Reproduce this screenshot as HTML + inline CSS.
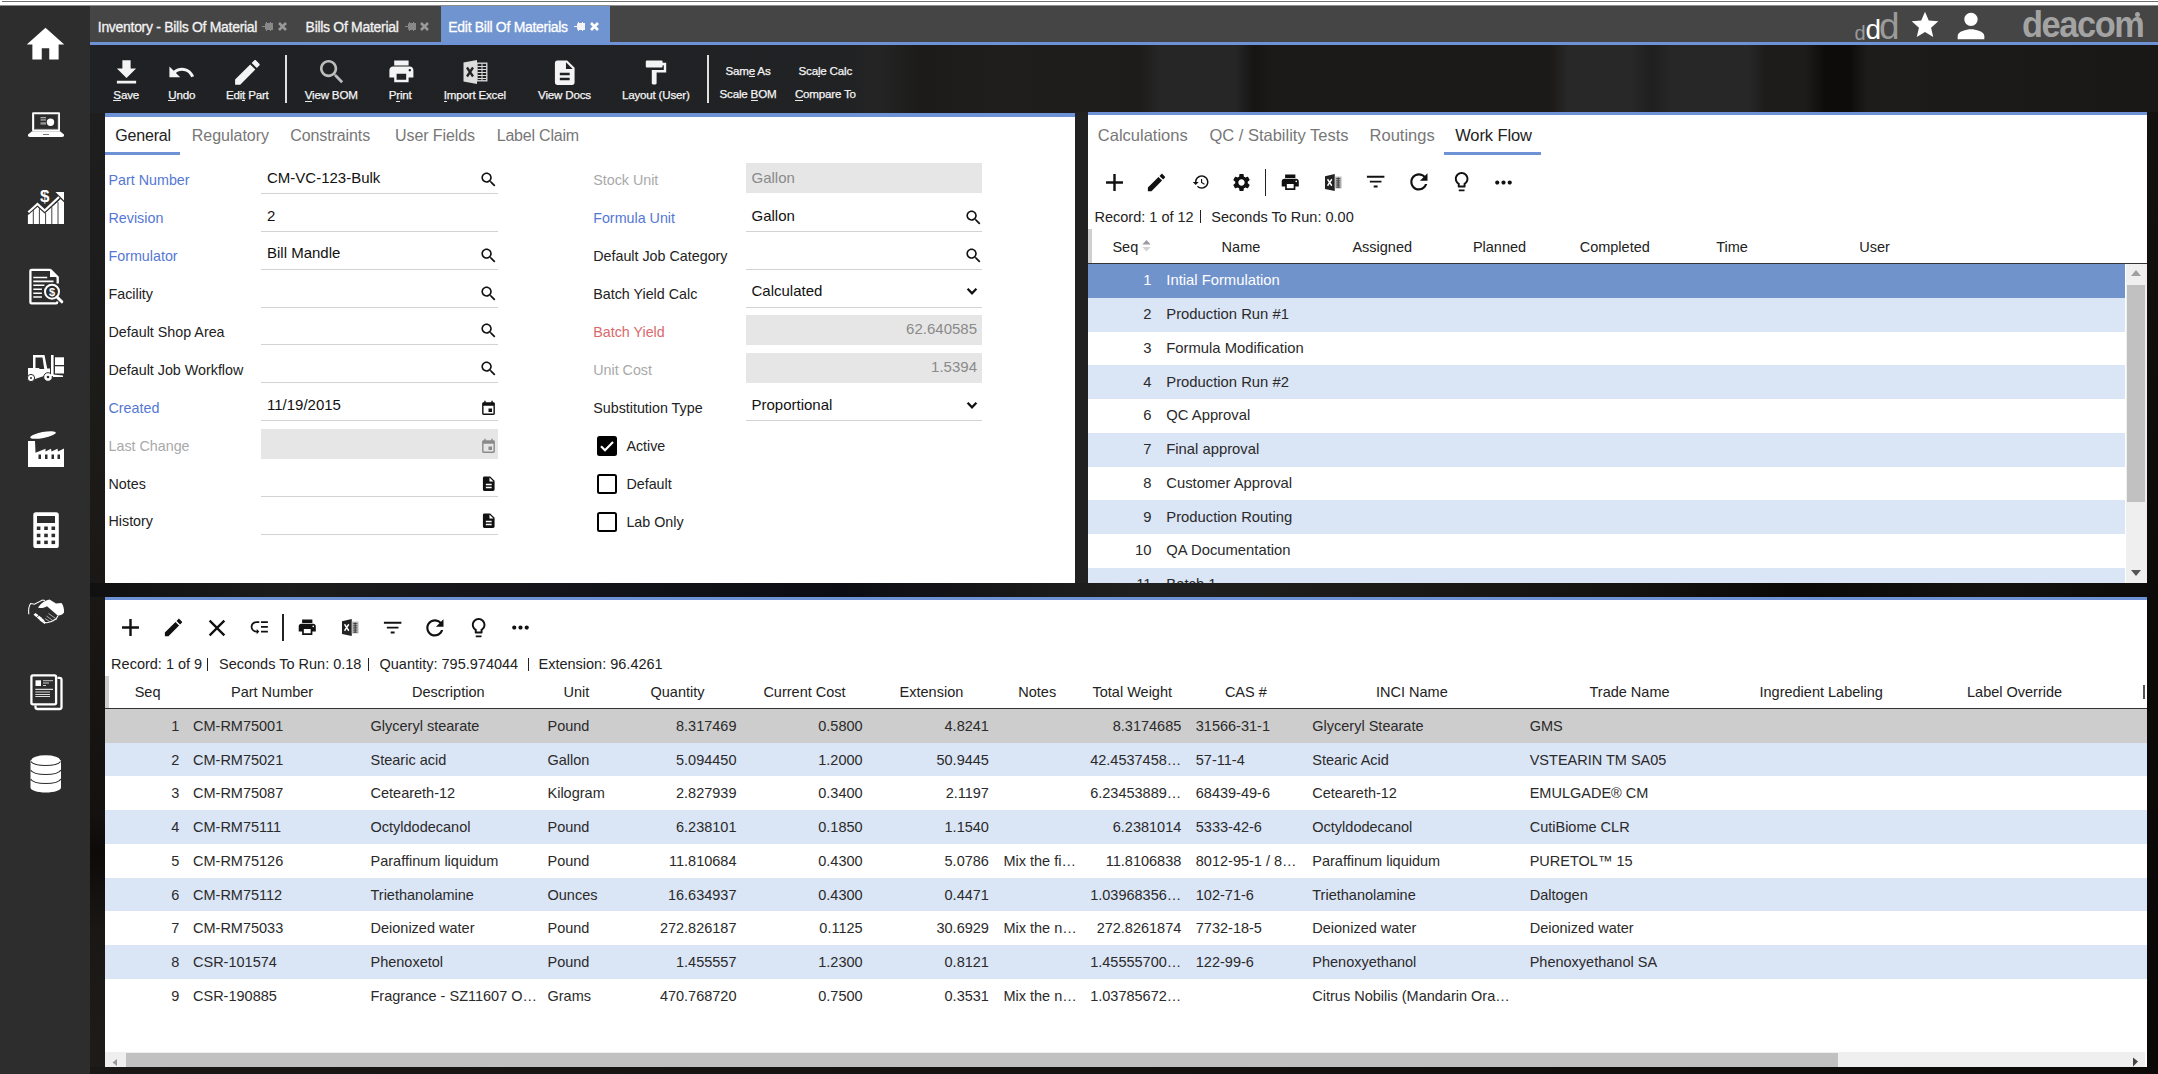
<!DOCTYPE html><html><head><meta charset="utf-8"><style>
*{margin:0;padding:0;box-sizing:border-box}
html,body{width:2158px;height:1074px;overflow:hidden}
body{position:relative;background:#222;font-family:"Liberation Sans",sans-serif;color:#222}
.a{position:absolute}
.t{position:absolute;white-space:nowrap;line-height:1}
</style></head><body>
<div class="a" style="left:0px;top:0px;width:2158px;height:5px;background:#fff;"></div>
<div class="a" style="left:0px;top:5px;width:2158px;height:1px;background:#8c8c8c;"></div>
<div class="a" style="left:2px;top:1px;width:2156px;height:1px;background:#6f6f6f;"></div>
<div class="a" style="left:90px;top:45px;width:2068px;height:1029px;background:linear-gradient(90deg,#202124 0px,#212224 760px,#242424 790px,#1c1b1a 830px,#1f1e1d 910px,#1d1c1b 1050px,#262626 1070px,#262626 1145px,#161514 1164px,#1c1a18 1182px,#1c1a18 1460px,#282828 1478px,#282828 1540px,#1f1f1f 1562px,#272727 1582px,#272727 1658px,#1e1c1b 1675px,#1e1c1b 1715px,#0e0c0a 1735px,#0e0c0a 1760px,#1e1c1a 1778px,#1e1c1a 1825px,#1c1a18 1845px,#1a1816 2068px);"></div>
<div class="a" style="left:90px;top:113px;width:15px;height:961px;background:linear-gradient(180deg,#1e1e1f 0,#1b1a18 400px,#131210 700px,#0c0b0a 740px,#1a1816 820px,#1e1c1a 961px);"></div>
<div class="a" style="left:1075px;top:112px;width:13px;height:471px;background:#212121;"></div>
<div class="a" style="left:90px;top:583px;width:2068px;height:14px;background:linear-gradient(90deg,#101010 0,#1c1c1c 200px,#14141a 450px,#0c0c14 750px,#1a1a1a 950px,#202020 1050px,#1c1b1a 1250px,#131210 1550px,#0a0908 1700px,#141210 1900px,#0c0b0a 2068px);"></div>
<div class="a" style="left:2147px;top:112px;width:11px;height:962px;background:linear-gradient(180deg,#141210 0,#0b0a08 500px,#0a0908 962px);"></div>
<div class="a" style="left:90px;top:1067px;width:2068px;height:7px;background:linear-gradient(90deg,#1a1816 0,#131210 1000px,#0b0a08 2068px);"></div>
<div class="a" style="left:0px;top:6px;width:90px;height:1068px;background:#2d2d2d;"></div>
<div class="a" style="left:90px;top:6px;width:2068px;height:36px;background:#454545;"></div>
<div class="a" style="left:90px;top:42px;width:2068px;height:3px;background:#6d93d6;"></div>
<div class="a" style="left:105px;top:113px;width:970px;height:470px;background:#fff;border-top:4px solid #6d93d6"></div>
<div class="a" style="left:1088px;top:112px;width:1059px;height:471px;background:#fff;border-top:3px solid #6d93d6"></div>
<div class="a" style="left:105px;top:597px;width:2042px;height:470px;background:#fff;border-top:3px solid #6d93d6"></div>
<div class="a" style="left:441px;top:6px;width:169px;height:36px;background:#7094cf;"></div>
<div class="t" style="top:19.75px;font-size:14px;color:#f2f2f2;letter-spacing:-0.3px;left:97.80px;-webkit-text-stroke:0.3px #f2f2f2;">Inventory - Bills Of Material</div>
<div class="t" style="top:19.75px;font-size:14px;color:#f2f2f2;letter-spacing:-0.3px;left:305.60px;-webkit-text-stroke:0.3px #f2f2f2;">Bills Of Material</div>
<div class="t" style="top:19.75px;font-size:14px;color:#fff;letter-spacing:-0.3px;left:448.30px;-webkit-text-stroke:0.3px #fff;">Edit Bill Of Materials</div>
<svg class="a" style="left:262px;top:22px;" width="12" height="9" viewBox="0 0 12 9"><path fill="#888" d="M0 4h3V1.5h1V0h1v1h3V0h1v1h2v7H9v1H8V8H5v1H4V7.5H3V5H0z"/></svg>
<svg class="a" style="left:278px;top:22px;" width="9" height="9" viewBox="0 0 9 9"><path stroke="#999" stroke-width="2.6" d="M1 1L8 8M8 1L1 8"/></svg>
<svg class="a" style="left:405px;top:22px;" width="12" height="9" viewBox="0 0 12 9"><path fill="#888" d="M0 4h3V1.5h1V0h1v1h3V0h1v1h2v7H9v1H8V8H5v1H4V7.5H3V5H0z"/></svg>
<svg class="a" style="left:420px;top:22px;" width="9" height="9" viewBox="0 0 9 9"><path stroke="#999" stroke-width="2.6" d="M1 1L8 8M8 1L1 8"/></svg>
<svg class="a" style="left:574px;top:22px;" width="12" height="9" viewBox="0 0 12 9"><path fill="#f4f4f4" d="M0 4h3V1.5h1V0h1v1h3V0h1v1h2v7H9v1H8V8H5v1H4V7.5H3V5H0z"/></svg>
<svg class="a" style="left:590px;top:22px;" width="9" height="9" viewBox="0 0 9 9"><path stroke="#fff" stroke-width="2.7" d="M1 1L8 8M8 1L1 8"/></svg>
<div class="t" style="top:22.67px;font-size:20px;color:#9a9a9a;left:1854.50px;">d</div>
<div class="t" style="top:15.90px;font-size:28px;color:#fff;left:1865.50px;">d</div>
<div class="t" style="top:8.28px;font-size:37px;color:#9a9a9a;left:1879.00px;">d</div>
<svg class="a" style="left:1909.00px;top:9.00px;" width="32" height="32" viewBox="0 0 24 24"><path fill="#fff" d="M12 17.27L18.18 21l-1.64-7.03L22 9.24l-7.19-.61L12 2 9.19 8.63 2 9.24l5.46 4.73L5.82 21z"/></svg>
<svg class="a" style="left:1951.00px;top:6.00px;" width="40" height="40" viewBox="0 0 24 24"><path fill="#fff" d="M12 12c2.21 0 4-1.79 4-4s-1.79-4-4-4-4 1.79-4 4 1.79 4 4 4zm0 2c-2.67 0-8 1.34-8 4v2h16v-2c0-2.66-5.33-4-8-4z"/></svg>
<div class="t" style="top:6.93px;font-size:36px;color:#a3a3a3;letter-spacing:-1.5px;font-weight:700;left:2022.00px;transform-origin:0 0;transform:scaleX(0.955);">deacom</div>
<div class="a" style="left:2135px;top:12px;width:5px;height:5px;border-radius:50%;background:#a3a3a3"></div>
<svg class="a" style="left:109.80px;top:55.50px;" width="33" height="33" viewBox="0 0 24 24"><path fill="#f4f4f4" d="M19 9h-4V3H9v6H5l7 7 7-7zM5 18v2h14v-2H5z"/></svg>
<div class="t" style="top:88.88px;font-size:11.6px;color:#f4f4f4;letter-spacing:-0.2px;left:126.20px;transform:translateX(-50%);-webkit-text-stroke:0.25px #f4f4f4;">Save</div>
<svg class="a" style="left:167.20px;top:58.30px;" width="28.9" height="28.9" viewBox="0 0 24 24"><path fill="#f4f4f4" d="M12.5 8c-2.65 0-5.05.99-6.9 2.6L2 7v9h9l-3.62-3.62c1.39-1.16 3.16-1.88 5.12-1.88 3.54 0 6.55 2.31 7.6 5.5l2.37-.78C21.08 11.03 17.15 8 12.5 8z"/></svg>
<div class="t" style="top:88.88px;font-size:11.6px;color:#f4f4f4;letter-spacing:-0.2px;left:181.80px;transform:translateX(-50%);-webkit-text-stroke:0.25px #f4f4f4;">Undo</div>
<svg class="a" style="left:231.30px;top:55.90px;" width="32.8" height="32.8" viewBox="0 0 24 24"><path fill="#f4f4f4" d="M3 17.25V21h3.75L17.81 9.94l-3.75-3.75L3 17.25zM20.71 7.04c.39-.39.39-1.02 0-1.41l-2.34-2.34c-.39-.39-1.02-.39-1.41 0l-1.83 1.83 3.75 3.75 1.83-1.83z"/></svg>
<div class="t" style="top:88.88px;font-size:11.6px;color:#f4f4f4;letter-spacing:-0.2px;left:247.30px;transform:translateX(-50%);-webkit-text-stroke:0.25px #f4f4f4;">Edit Part</div>
<div class="a" style="left:285px;top:54.5px;width:2px;height:48px;background:#e0e0e0;"></div>
<svg class="a" style="left:315.80px;top:56.40px;" width="31.8" height="31.8" viewBox="0 0 24 24"><path fill="#bdbdbd" d="M15.5 14h-.79l-.28-.27C15.41 12.59 16 11.11 16 9.5 16 5.91 13.09 3 9.5 3S3 5.91 3 9.5 5.91 16 9.5 16c1.61 0 3.09-.59 4.23-1.57l.27.28v.79l5 4.99L20.49 19l-4.990-5zm-6 0C7.01 14 5 11.990 5 9.5S7.01 5 9.5 5 14 7.01 14 9.5 11.99 14 9.5 14z"/></svg>
<div class="t" style="top:88.88px;font-size:11.6px;color:#f4f4f4;letter-spacing:-0.2px;left:331.20px;transform:translateX(-50%);-webkit-text-stroke:0.25px #f4f4f4;">View BOM</div>
<svg class="a" style="left:386.60px;top:57.10px;" width="28.8" height="28.8" viewBox="0 0 24 24"><path fill="#f4f4f4" d="M19 8H5c-1.66 0-3 1.34-3 3v6h4v4h12v-4h4v-6c0-1.66-1.34-3-3-3zm-3 11H8v-5h8v5zm3-7c-.55 0-1-.45-1-1s.45-1 1-1 1 .45 1 1-.45 1-1 1zm-1-9H6v4h12V3z"/></svg>
<div class="t" style="top:88.88px;font-size:11.6px;color:#f4f4f4;letter-spacing:-0.2px;left:400.20px;transform:translateX(-50%);-webkit-text-stroke:0.25px #f4f4f4;">Print</div>
<div class="t" style="top:88.88px;font-size:11.6px;color:#f4f4f4;letter-spacing:-0.2px;left:474.80px;transform:translateX(-50%);-webkit-text-stroke:0.25px #f4f4f4;">Import Excel</div>
<svg class="a" style="left:549.60px;top:57.50px;" width="29.5" height="29.5" viewBox="0 0 24 24"><path fill="#f4f4f4" d="M14 2H6c-1.1 0-1.99.9-1.99 2L4 20c0 1.1.89 2 1.99 2H18c1.1 0 2-.9 2-2V8l-6-6zm2 16H8v-2h8v2zm0-4H8v-2h8v2zm-3-5V3.5L18.5 9H13z"/></svg>
<div class="t" style="top:88.88px;font-size:11.6px;color:#f4f4f4;letter-spacing:-0.2px;left:564.50px;transform:translateX(-50%);-webkit-text-stroke:0.25px #f4f4f4;">View Docs</div>
<svg class="a" style="left:640.90px;top:57.70px;" width="28.8" height="28.8" viewBox="0 0 24 24"><path fill="#f4f4f4" d="M18 4V3c0-.55-.45-1-1-1H5c-.55 0-1 .45-1 1v4c0 .55.45 1 1 1h12c.55 0 1-.45 1-1V6h1v4H9v11c0 .55.45 1 1 1h2c.55 0 1-.45 1-1v-9h8V4h-3z"/></svg>
<div class="t" style="top:88.88px;font-size:11.6px;color:#f4f4f4;letter-spacing:-0.2px;left:655.80px;transform:translateX(-50%);-webkit-text-stroke:0.25px #f4f4f4;">Layout (User)</div>
<div class="a" style="left:706.5px;top:54.5px;width:2px;height:48px;background:#e0e0e0;"></div>
<div class="t" style="top:64.88px;font-size:11.6px;color:#f4f4f4;letter-spacing:-0.2px;left:748.00px;transform:translateX(-50%);-webkit-text-stroke:0.25px #f4f4f4;">Same As</div>
<div class="t" style="top:64.88px;font-size:11.6px;color:#f4f4f4;letter-spacing:-0.2px;left:825.30px;transform:translateX(-50%);-webkit-text-stroke:0.25px #f4f4f4;">Scale Calc</div>
<div class="t" style="top:88.38px;font-size:11.6px;color:#f4f4f4;letter-spacing:-0.2px;left:748.00px;transform:translateX(-50%);-webkit-text-stroke:0.25px #f4f4f4;">Scale BOM</div>
<div class="t" style="top:88.38px;font-size:11.6px;color:#f4f4f4;letter-spacing:-0.2px;left:825.40px;transform:translateX(-50%);-webkit-text-stroke:0.25px #f4f4f4;">Compare To</div>
<div class="a" style="left:113.4px;top:100px;width:7.5px;height:1px;background:#e8e8e8;"></div>
<div class="a" style="left:168.3px;top:100px;width:8.2px;height:1px;background:#e8e8e8;"></div>
<div class="a" style="left:242.1px;top:100px;width:3.0px;height:1px;background:#e8e8e8;"></div>
<div class="a" style="left:304.7px;top:100.5px;width:7.3px;height:1px;background:#e8e8e8;"></div>
<div class="a" style="left:396.3px;top:100.5px;width:3.7px;height:1px;background:#e8e8e8;"></div>
<div class="a" style="left:443.8px;top:100.5px;width:3.0px;height:1px;background:#e8e8e8;"></div>
<div class="a" style="left:748.7px;top:76px;width:6.3px;height:1px;background:#e8e8e8;"></div>
<div class="a" style="left:818px;top:76px;width:2.4px;height:1px;background:#e8e8e8;"></div>
<div class="a" style="left:750.6px;top:99.6px;width:7.5px;height:1px;background:#e8e8e8;"></div>
<div class="a" style="left:794.9px;top:99.6px;width:8.2px;height:1px;background:#e8e8e8;"></div>
<svg class="a" style="left:462.5px;top:59.6px;" width="25" height="24" viewBox="0 0 24 24"><path fill="#dcdcdc" d="M0 2.5L13.5 0V24L0 21.5z"/><rect x="13.5" y="3.2" width="9.8" height="17.6" fill="none" stroke="#dcdcdc" stroke-width="1.3"/><path stroke="#dcdcdc" stroke-width="1" d="M14 6.5h9M14 9.5h9M14 12.5h9M14 15.5h9M14 18.5h9M18.5 3.5v17"/><path stroke="#222" stroke-width="2.3" d="M3.5 7.5l6 9M9.5 7.5l-6 9"/></svg>
<div class="t" style="top:128.06px;font-size:16px;color:#222;letter-spacing:-0.2px;left:115.30px;">General</div>
<div class="t" style="top:128.06px;font-size:16px;color:#777;left:191.70px;">Regulatory</div>
<div class="t" style="top:128.06px;font-size:16px;color:#777;letter-spacing:-0.1px;left:290.30px;">Constraints</div>
<div class="t" style="top:128.06px;font-size:16px;color:#777;letter-spacing:-0.1px;left:395.10px;">User Fields</div>
<div class="t" style="top:128.06px;font-size:16px;color:#777;letter-spacing:-0.2px;left:496.70px;">Label Claim</div>
<div class="a" style="left:105px;top:152.4px;width:75px;height:3px;background:#6d93d6;"></div>
<div class="t" style="top:173.30px;font-size:14.3px;color:#5577d4;left:108.50px;">Part Number</div>
<div class="a" style="left:261px;top:193px;width:237px;height:1px;background:#d3d3d3;"></div>
<div class="t" style="top:169.60px;font-size:15px;color:#111;left:267.00px;">CM-VC-123-Bulk</div>
<svg class="a" style="left:479.30px;top:169.80px;" width="19.2" height="19.2" viewBox="0 0 24 24"><path fill="#111" d="M15.5 14h-.79l-.28-.27C15.41 12.59 16 11.11 16 9.5 16 5.91 13.09 3 9.5 3S3 5.91 3 9.5 5.91 16 9.5 16c1.61 0 3.09-.59 4.23-1.57l.27.28v.79l5 4.99L20.49 19l-4.990-5zm-6 0C7.01 14 5 11.990 5 9.5S7.01 5 9.5 5 14 7.01 14 9.5 11.99 14 9.5 14z"/></svg>
<div class="t" style="top:211.20px;font-size:14.3px;color:#5577d4;left:108.50px;">Revision</div>
<div class="a" style="left:261px;top:231px;width:237px;height:1px;background:#d3d3d3;"></div>
<div class="t" style="top:207.50px;font-size:15px;color:#111;left:267.00px;">2</div>
<div class="t" style="top:249.10px;font-size:14.3px;color:#5577d4;left:108.50px;">Formulator</div>
<div class="a" style="left:261px;top:269px;width:237px;height:1px;background:#d3d3d3;"></div>
<div class="t" style="top:245.40px;font-size:15px;color:#111;left:267.00px;">Bill Mandle</div>
<svg class="a" style="left:479.30px;top:245.60px;" width="19.2" height="19.2" viewBox="0 0 24 24"><path fill="#111" d="M15.5 14h-.79l-.28-.27C15.41 12.59 16 11.11 16 9.5 16 5.91 13.09 3 9.5 3S3 5.91 3 9.5 5.91 16 9.5 16c1.61 0 3.09-.59 4.23-1.57l.27.28v.79l5 4.99L20.49 19l-4.990-5zm-6 0C7.01 14 5 11.990 5 9.5S7.01 5 9.5 5 14 7.01 14 9.5 11.99 14 9.5 14z"/></svg>
<div class="t" style="top:287.00px;font-size:14.3px;color:#222;left:108.50px;">Facility</div>
<div class="a" style="left:261px;top:307px;width:237px;height:1px;background:#d3d3d3;"></div>
<svg class="a" style="left:479.30px;top:283.50px;" width="19.2" height="19.2" viewBox="0 0 24 24"><path fill="#111" d="M15.5 14h-.79l-.28-.27C15.41 12.59 16 11.11 16 9.5 16 5.91 13.09 3 9.5 3S3 5.91 3 9.5 5.91 16 9.5 16c1.61 0 3.09-.59 4.23-1.57l.27.28v.79l5 4.99L20.49 19l-4.990-5zm-6 0C7.01 14 5 11.990 5 9.5S7.01 5 9.5 5 14 7.01 14 9.5 11.99 14 9.5 14z"/></svg>
<div class="t" style="top:324.90px;font-size:14.3px;color:#222;left:108.50px;">Default Shop Area</div>
<div class="a" style="left:261px;top:344px;width:237px;height:1px;background:#d3d3d3;"></div>
<svg class="a" style="left:479.30px;top:321.40px;" width="19.2" height="19.2" viewBox="0 0 24 24"><path fill="#111" d="M15.5 14h-.79l-.28-.27C15.41 12.59 16 11.11 16 9.5 16 5.91 13.09 3 9.5 3S3 5.91 3 9.5 5.91 16 9.5 16c1.61 0 3.09-.59 4.23-1.57l.27.28v.79l5 4.99L20.49 19l-4.990-5zm-6 0C7.01 14 5 11.990 5 9.5S7.01 5 9.5 5 14 7.01 14 9.5 11.99 14 9.5 14z"/></svg>
<div class="t" style="top:362.80px;font-size:14.3px;color:#222;left:108.50px;">Default Job Workflow</div>
<div class="a" style="left:261px;top:382px;width:237px;height:1px;background:#d3d3d3;"></div>
<svg class="a" style="left:479.30px;top:359.30px;" width="19.2" height="19.2" viewBox="0 0 24 24"><path fill="#111" d="M15.5 14h-.79l-.28-.27C15.41 12.59 16 11.11 16 9.5 16 5.91 13.09 3 9.5 3S3 5.91 3 9.5 5.91 16 9.5 16c1.61 0 3.09-.59 4.23-1.57l.27.28v.79l5 4.99L20.49 19l-4.990-5zm-6 0C7.01 14 5 11.990 5 9.5S7.01 5 9.5 5 14 7.01 14 9.5 11.99 14 9.5 14z"/></svg>
<div class="t" style="top:400.70px;font-size:14.3px;color:#5577d4;left:108.50px;">Created</div>
<div class="a" style="left:261px;top:420px;width:237px;height:1px;background:#d3d3d3;"></div>
<div class="t" style="top:397.00px;font-size:15px;color:#111;left:267.00px;">11/19/2015</div>
<svg class="a" style="left:480.20px;top:399.80px;" width="17" height="17" viewBox="0 0 24 24"><path fill="#111" d="M17 12h-5v5h5v-5zM16 1v2H8V1H6v2H5c-1.11 0-1.99.9-1.99 2L3 19c0 1.1.89 2 2 2h14c1.1 0 2-.9 2-2V5c0-1.1-.9-2-2-2h-1V1h-2zm3 18H5V8h14v11z"/></svg>
<div class="t" style="top:438.60px;font-size:14.3px;color:#a9a9a9;left:108.50px;">Last Change</div>
<div class="a" style="left:261px;top:428.70000000000005px;width:237px;height:30px;background:#e6e6e6;"></div>
<svg class="a" style="left:480.20px;top:437.70px;" width="17" height="17" viewBox="0 0 24 24"><path fill="#8a8a8a" d="M17 12h-5v5h5v-5zM16 1v2H8V1H6v2H5c-1.11 0-1.99.9-1.99 2L3 19c0 1.1.89 2 2 2h14c1.1 0 2-.9 2-2V5c0-1.1-.9-2-2-2h-1V1h-2zm3 18H5V8h14v11z"/></svg>
<div class="t" style="top:476.50px;font-size:14.3px;color:#222;left:108.50px;">Notes</div>
<div class="a" style="left:261px;top:496px;width:237px;height:1px;background:#d3d3d3;"></div>
<svg class="a" style="left:480.00px;top:474.50px;" width="17.5" height="17.5" viewBox="0 0 24 24"><path fill="#111" d="M14 2H6c-1.1 0-1.99.9-1.99 2L4 20c0 1.1.89 2 1.99 2H18c1.1 0 2-.9 2-2V8l-6-6zm2 16H8v-2h8v2zm0-4H8v-2h8v2zm-3-5V3.5L18.5 9H13z"/></svg>
<div class="t" style="top:514.40px;font-size:14.3px;color:#222;left:108.50px;">History</div>
<div class="a" style="left:261px;top:534px;width:237px;height:1px;background:#d3d3d3;"></div>
<svg class="a" style="left:480.00px;top:512.40px;" width="17.5" height="17.5" viewBox="0 0 24 24"><path fill="#111" d="M14 2H6c-1.1 0-1.99.9-1.99 2L4 20c0 1.1.89 2 1.99 2H18c1.1 0 2-.9 2-2V8l-6-6zm2 16H8v-2h8v2zm0-4H8v-2h8v2zm-3-5V3.5L18.5 9H13z"/></svg>
<div class="t" style="top:173.30px;font-size:14.3px;color:#a9a9a9;left:593.20px;">Stock Unit</div>
<div class="a" style="left:746px;top:163.4px;width:236px;height:30px;background:#e6e6e6;"></div>
<div class="t" style="top:169.60px;font-size:15px;color:#8a8a8a;left:751.50px;">Gallon</div>
<div class="t" style="top:211.20px;font-size:14.3px;color:#5577d4;left:593.20px;">Formula Unit</div>
<div class="a" style="left:746px;top:231px;width:236px;height:1px;background:#d3d3d3;"></div>
<div class="t" style="top:207.50px;font-size:15px;color:#111;left:751.50px;">Gallon</div>
<svg class="a" style="left:963.80px;top:207.70px;" width="19.2" height="19.2" viewBox="0 0 24 24"><path fill="#111" d="M15.5 14h-.79l-.28-.27C15.41 12.59 16 11.11 16 9.5 16 5.91 13.09 3 9.5 3S3 5.91 3 9.5 5.91 16 9.5 16c1.61 0 3.09-.59 4.23-1.57l.27.28v.79l5 4.99L20.49 19l-4.990-5zm-6 0C7.01 14 5 11.990 5 9.5S7.01 5 9.5 5 14 7.01 14 9.5 11.99 14 9.5 14z"/></svg>
<div class="t" style="top:249.10px;font-size:14.3px;color:#222;left:593.20px;">Default Job Category</div>
<div class="a" style="left:746px;top:269px;width:236px;height:1px;background:#d3d3d3;"></div>
<svg class="a" style="left:963.80px;top:245.60px;" width="19.2" height="19.2" viewBox="0 0 24 24"><path fill="#111" d="M15.5 14h-.79l-.28-.27C15.41 12.59 16 11.11 16 9.5 16 5.91 13.09 3 9.5 3S3 5.91 3 9.5 5.91 16 9.5 16c1.61 0 3.09-.59 4.23-1.57l.27.28v.79l5 4.99L20.49 19l-4.990-5zm-6 0C7.01 14 5 11.990 5 9.5S7.01 5 9.5 5 14 7.01 14 9.5 11.99 14 9.5 14z"/></svg>
<div class="t" style="top:287.00px;font-size:14.3px;color:#222;left:593.20px;">Batch Yield Calc</div>
<div class="a" style="left:746px;top:307px;width:236px;height:1px;background:#d3d3d3;"></div>
<div class="t" style="top:283.30px;font-size:15px;color:#111;left:751.50px;">Calculated</div>
<svg class="a" style="left:965px;top:286.1px;" width="14" height="12" viewBox="0 0 14 12"><path d="M2.6 2.8L7 7.3L11.4 2.8" stroke="#111" stroke-width="2.3" fill="none"/></svg>
<div class="t" style="top:324.90px;font-size:14.3px;color:#d9696b;left:593.20px;">Batch Yield</div>
<div class="a" style="left:746px;top:315.0px;width:236px;height:30px;background:#e6e6e6;"></div>
<div class="t" style="top:321.20px;font-size:15px;color:#8a8a8a;right:1181.00px;">62.640585</div>
<div class="t" style="top:362.80px;font-size:14.3px;color:#a9a9a9;left:593.20px;">Unit Cost</div>
<div class="a" style="left:746px;top:352.9px;width:236px;height:30px;background:#e6e6e6;"></div>
<div class="t" style="top:359.10px;font-size:15px;color:#8a8a8a;right:1181.00px;">1.5394</div>
<div class="t" style="top:400.70px;font-size:14.3px;color:#222;left:593.20px;">Substitution Type</div>
<div class="a" style="left:746px;top:420px;width:236px;height:1px;background:#d3d3d3;"></div>
<div class="t" style="top:397.00px;font-size:15px;color:#111;left:751.50px;">Proportional</div>
<svg class="a" style="left:965px;top:399.8px;" width="14" height="12" viewBox="0 0 14 12"><path d="M2.6 2.8L7 7.3L11.4 2.8" stroke="#111" stroke-width="2.3" fill="none"/></svg>
<div class="a" style="left:596.5px;top:436px;width:20.5px;height:20px;background:#000;border-radius:2.5px"></div>
<svg class="a" style="left:597px;top:436px;" width="20" height="20" viewBox="0 0 20 20"><path fill="none" stroke="#fff" stroke-width="2.2" d="M4 10.2l4 4 8-8.2"/></svg>
<div class="t" style="top:438.90px;font-size:14.3px;color:#222;left:626.40px;">Active</div>
<div class="a" style="left:596.5px;top:474px;width:20.5px;height:20px;border:2.3px solid #000;border-radius:2.5px"></div>
<div class="t" style="top:476.80px;font-size:14.3px;color:#222;left:626.40px;">Default</div>
<div class="a" style="left:596.5px;top:512px;width:20.5px;height:20px;border:2.3px solid #000;border-radius:2.5px"></div>
<div class="t" style="top:514.70px;font-size:14.3px;color:#222;left:626.40px;">Lab Only</div>
<div class="t" style="top:126.63px;font-size:16.5px;color:#777;left:1097.80px;">Calculations</div>
<div class="t" style="top:126.63px;font-size:16.5px;color:#777;left:1209.40px;">QC / Stability Tests</div>
<div class="t" style="top:126.63px;font-size:16.5px;color:#777;left:1369.60px;">Routings</div>
<div class="t" style="top:126.63px;font-size:16.5px;color:#222;letter-spacing:-0.1px;left:1455.20px;">Work Flow</div>
<div class="a" style="left:1444px;top:151.8px;width:97.4px;height:3px;background:#6d93d6;"></div>
<svg class="a" style="left:1099.60px;top:167.50px;" width="29" height="29" viewBox="0 0 24 24"><path fill="#111" d="M19 13h-6v6h-2v-6H5v-2h6V5h2v6h6v2z"/></svg>
<svg class="a" style="left:1145.40px;top:170.50px;" width="23" height="23" viewBox="0 0 24 24"><path fill="#111" d="M3 17.25V21h3.75L17.81 9.94l-3.75-3.75L3 17.25zM20.71 7.04c.39-.39.39-1.02 0-1.41l-2.34-2.34c-.39-.39-1.02-.39-1.41 0l-1.83 1.83 3.75 3.75 1.83-1.83z"/></svg>
<svg class="a" style="left:1191.50px;top:173.00px;" width="18" height="18" viewBox="0 0 24 24"><path fill="#111" d="M13 3c-4.97 0-9 4.030-9 9H1l3.89 3.89.07.14L9 12H6c0-3.87 3.13-7 7-7s7 3.13 7 7-3.13 7-7 7c-1.93 0-3.68-.79-4.94-2.06l-1.42 1.42C8.27 19.990 10.51 21 13 21c4.97 0 9-4.03 9-9s-4.03-9-9-9zm-1 5v5l4.28 2.54.72-1.21-3.5-2.08V8H12z"/></svg>
<svg class="a" style="left:1231.40px;top:171.50px;" width="21" height="21" viewBox="0 0 24 24"><path fill="#111" d="M19.14 12.94c.04-.3.06-.61.06-.94 0-.32-.02-.64-.07-.94l2.03-1.58c.18-.14.23-.41.12-.61l-1.92-3.32c-.12-.22-.37-.29-.59-.22l-2.39.96c-.5-.38-1.03-.7-1.62-.94l-.36-2.54c-.04-.24-.24-.41-.48-.41h-3.84c-.24 0-.43.17-.47.41l-.36 2.54c-.59.24-1.13.57-1.62.94l-2.39-.96c-.22-.08-.47 0-.59.22L2.74 8.87c-.12.21-.08.47.12.61l2.03 1.58c-.05.3-.09.63-.09.94s.02.64.07.94l-2.03 1.58c-.18.14-.23.41-.12.61l1.92 3.32c.12.22.37.29.59.22l2.39-.96c.5.38 1.03.7 1.62.94l.36 2.54c.05.24.24.41.48.41h3.840c.24 0 .44-.17.47-.41l.36-2.54c.59-.24 1.13-.56 1.62-.94l2.39.96c.22.08.47 0 .59-.22l1.92-3.32c.12-.22.07-.47-.12-.61l-2.01-1.58zM12 15.6c-1.98 0-3.6-1.62-3.6-3.6s1.62-3.6 3.6-3.6 3.6 1.62 3.6 3.6-1.62 3.6-3.6 3.6z"/></svg>
<svg class="a" style="left:1280.15px;top:171.75px;" width="20.5" height="20.5" viewBox="0 0 24 24"><path fill="#111" d="M19 8H5c-1.66 0-3 1.34-3 3v6h4v4h12v-4h4v-6c0-1.66-1.34-3-3-3zm-3 11H8v-5h8v5zm3-7c-.55 0-1-.45-1-1s.45-1 1-1 1 .45 1 1-.45 1-1 1zm-1-9H6v4h12V3z"/></svg>
<svg class="a" style="left:1325.1px;top:173.5px;" width="17" height="17" viewBox="0 0 20 20"><path fill="#222" d="M0 2.5L11.5 0V20L0 17.5z"/><path fill="#bbb" d="M11.5 3h8v14h-8z"/><path stroke="#222" stroke-width="0.9" d="M13 5.5h5M13 8h5M13 10.5h5M13 13h5M13 15.5h5M15.5 4v12"/><path stroke="#fff" stroke-width="1.7" d="M3 6.2l5 7.6M8 6.2l-5 7.6"/></svg>
<svg class="a" style="left:1364.15px;top:170.35px;" width="23.3" height="23.3" viewBox="0 0 24 24"><path fill="#111" d="M10 18h4v-2h-4v2zM3 6v2h18V6H3zm3 7h12v-2H6v2z"/></svg>
<svg class="a" style="left:1405.80px;top:169.10px;" width="25.8" height="25.8" viewBox="0 0 24 24"><path fill="#111" d="M17.65 6.35C16.2 4.9 14.21 4 12 4c-4.42 0-7.99 3.58-7.99 8s3.57 8 7.99 8c3.73 0 6.84-2.55 7.73-6h-2.08c-.82 2.33-3.04 4-5.65 4-3.31 0-6-2.69-6-6s2.69-6 6-6c1.66 0 3.14.69 4.22 1.78L13 11h7V4l-2.35 2.35z"/></svg>
<svg class="a" style="left:1449.85px;top:170.35px;" width="23.3" height="23.3" viewBox="0 0 24 24"><path fill="#111" d="M9 21c0 .55.45 1 1 1h4c.55 0 1-.45 1-1v-1H9v1zm3-19C8.14 2 5 5.14 5 9c0 2.38 1.19 4.47 3 5.74V17c0 .55.45 1 1 1h6c.55 0 1-.45 1-1v-2.26c1.81-1.27 3-3.36 3-5.74 0-3.86-3.14-7-7-7zm2.85 11.1l-.85.6V16h-4v-2.3l-.85-.6C7.8 12.16 7 10.63 7 9c0-2.76 2.24-5 5-5s5 2.24 5 5c0 1.63-.8 3.16-2.15 4.1z"/></svg>
<svg class="a" style="left:1491.40px;top:169.50px;" width="25" height="25" viewBox="0 0 24 24"><path fill="#111" d="M6 10c-1.1 0-2 .9-2 2s.9 2 2 2 2-.9 2-2-.9-2-2-2zm12 0c-1.1 0-2 .9-2 2s.9 2 2 2 2-.9 2-2-.9-2-2-2zm-6 0c-1.1 0-2 .9-2 2s.9 2 2 2 2-.9 2-2-.9-2-2-2z"/></svg>
<div class="a" style="left:1264.5px;top:169.2px;width:1.6px;height:26.5px;background:#222;"></div>
<div class="t" style="top:209.53px;font-size:14.5px;color:#222;left:1094.50px;">Record: 1 of 12</div>
<div class="a" style="left:1199.5px;top:210px;width:1.3px;height:13px;background:#222;"></div>
<div class="t" style="top:209.53px;font-size:14.5px;color:#222;left:1211.30px;">Seconds To Run: 0.00</div>
<div class="a" style="left:1088px;top:229px;width:3.5px;height:34.5px;background:#cfcfcf;"></div>
<div class="t" style="top:239.63px;font-size:14.5px;color:#222;left:1112.40px;">Seq</div>
<div class="t" style="top:239.63px;font-size:14.5px;color:#222;left:1221.60px;">Name</div>
<div class="t" style="top:239.63px;font-size:14.5px;color:#222;left:1352.40px;">Assigned</div>
<div class="t" style="top:239.63px;font-size:14.5px;color:#222;left:1472.90px;">Planned</div>
<div class="t" style="top:239.63px;font-size:14.5px;color:#222;left:1579.70px;">Completed</div>
<div class="t" style="top:239.63px;font-size:14.5px;color:#222;left:1716.20px;">Time</div>
<div class="t" style="top:239.63px;font-size:14.5px;color:#222;left:1859.30px;">User</div>
<svg class="a" style="left:1142px;top:240.3px;" width="9" height="12" viewBox="0 0 9 12"><path fill="#9c9c9c" d="M4.5 0L8.7 4.6H0.3z"/><path fill="#d2d2d2" d="M4.5 11.6L8.7 7H0.3z"/></svg>
<div class="a" style="left:1088px;top:262.7px;width:1059px;height:1.2px;background:#333;"></div>
<div class="a" style="left:1088px;top:264px;width:1037px;height:319px;overflow:hidden">
<div class="a" style="left:0;top:0.00px;width:1037px;height:33.75px;background:#7093cc"></div>
<div class="t" style="right:973.5px;top:9.47px;font-size:14.8px;color:#fff">1</div>
<div class="t" style="left:78.3px;top:9.47px;font-size:14.8px;color:#fff">Intial Formulation</div>
<div class="a" style="left:0;top:33.75px;width:1037px;height:33.75px;background:#dae5f6"></div>
<div class="t" style="right:973.5px;top:43.22px;font-size:14.8px;color:#2a2a2a">2</div>
<div class="t" style="left:78.3px;top:43.22px;font-size:14.8px;color:#2a2a2a">Production Run #1</div>
<div class="a" style="left:0;top:67.50px;width:1037px;height:33.75px;background:#fff"></div>
<div class="t" style="right:973.5px;top:76.97px;font-size:14.8px;color:#2a2a2a">3</div>
<div class="t" style="left:78.3px;top:76.97px;font-size:14.8px;color:#2a2a2a">Formula Modification</div>
<div class="a" style="left:0;top:101.25px;width:1037px;height:33.75px;background:#dae5f6"></div>
<div class="t" style="right:973.5px;top:110.72px;font-size:14.8px;color:#2a2a2a">4</div>
<div class="t" style="left:78.3px;top:110.72px;font-size:14.8px;color:#2a2a2a">Production Run #2</div>
<div class="a" style="left:0;top:135.00px;width:1037px;height:33.75px;background:#fff"></div>
<div class="t" style="right:973.5px;top:144.47px;font-size:14.8px;color:#2a2a2a">6</div>
<div class="t" style="left:78.3px;top:144.47px;font-size:14.8px;color:#2a2a2a">QC Approval</div>
<div class="a" style="left:0;top:168.75px;width:1037px;height:33.75px;background:#dae5f6"></div>
<div class="t" style="right:973.5px;top:178.22px;font-size:14.8px;color:#2a2a2a">7</div>
<div class="t" style="left:78.3px;top:178.22px;font-size:14.8px;color:#2a2a2a">Final approval</div>
<div class="a" style="left:0;top:202.50px;width:1037px;height:33.75px;background:#fff"></div>
<div class="t" style="right:973.5px;top:211.97px;font-size:14.8px;color:#2a2a2a">8</div>
<div class="t" style="left:78.3px;top:211.97px;font-size:14.8px;color:#2a2a2a">Customer Approval</div>
<div class="a" style="left:0;top:236.25px;width:1037px;height:33.75px;background:#dae5f6"></div>
<div class="t" style="right:973.5px;top:245.72px;font-size:14.8px;color:#2a2a2a">9</div>
<div class="t" style="left:78.3px;top:245.72px;font-size:14.8px;color:#2a2a2a">Production Routing</div>
<div class="a" style="left:0;top:270.00px;width:1037px;height:33.75px;background:#fff"></div>
<div class="t" style="right:973.5px;top:279.47px;font-size:14.8px;color:#2a2a2a">10</div>
<div class="t" style="left:78.3px;top:279.47px;font-size:14.8px;color:#2a2a2a">QA Documentation</div>
<div class="a" style="left:0;top:303.75px;width:1037px;height:33.75px;background:#dae5f6"></div>
<div class="t" style="right:973.5px;top:313.22px;font-size:14.8px;color:#2a2a2a">11</div>
<div class="t" style="left:78.3px;top:313.22px;font-size:14.8px;color:#2a2a2a">Batch 1</div>
</div>
<div class="a" style="left:2125.5px;top:264px;width:21px;height:319px;background:#efefef;"></div>
<div class="a" style="left:2127px;top:285px;width:18px;height:217px;background:#c1c1c1;"></div>
<svg class="a" style="left:2130px;top:269px;" width="12" height="8" viewBox="0 0 12 8"><path fill="#a0a0a0" d="M6 1L11 7H1z"/></svg>
<svg class="a" style="left:2130px;top:569px;" width="12" height="8" viewBox="0 0 12 8"><path fill="#555" d="M6 7L11 1H1z"/></svg>
<svg class="a" style="left:116.10px;top:613.00px;" width="29" height="29" viewBox="0 0 24 24"><path fill="#111" d="M19 13h-6v6h-2v-6H5v-2h6V5h2v6h6v2z"/></svg>
<svg class="a" style="left:162.10px;top:616.00px;" width="23" height="23" viewBox="0 0 24 24"><path fill="#111" d="M3 17.25V21h3.75L17.81 9.94l-3.75-3.75L3 17.25zM20.71 7.04c.39-.39.39-1.02 0-1.41l-2.34-2.34c-.39-.39-1.02-.39-1.41 0l-1.83 1.83 3.75 3.75 1.83-1.83z"/></svg>
<svg class="a" style="left:202.70px;top:613.50px;" width="28" height="28" viewBox="0 0 24 24"><path fill="#111" d="M19 6.41L17.59 5 12 10.59 6.41 5 5 6.41 10.59 12 5 17.59 6.41 19 12 13.41 17.59 19 19 17.59 13.41 12z"/></svg>
<svg class="a" style="left:249.40px;top:617.20px;" width="20.6" height="20.6" viewBox="0 0 24 24"><path fill="#111" d="M14 5h8v2h-8zm0 5.5h8v2h-8zm0 5.5h8v2h-8zM2 11.5C2 15.08 4.92 18 8.5 18H9v2l3-3-3-3v2h-.5C6.02 16 4 13.98 4 11.5S6.02 7 8.5 7H12V5H8.5C4.92 5 2 7.92 2 11.5z"/></svg>
<svg class="a" style="left:296.75px;top:617.25px;" width="20.5" height="20.5" viewBox="0 0 24 24"><path fill="#111" d="M19 8H5c-1.66 0-3 1.34-3 3v6h4v4h12v-4h4v-6c0-1.66-1.34-3-3-3zm-3 11H8v-5h8v5zm3-7c-.55 0-1-.45-1-1s.45-1 1-1 1 .45 1 1-.45 1-1 1zm-1-9H6v4h12V3z"/></svg>
<svg class="a" style="left:341.5px;top:619.0px;" width="17" height="17" viewBox="0 0 20 20"><path fill="#222" d="M0 2.5L11.5 0V20L0 17.5z"/><path fill="#bbb" d="M11.5 3h8v14h-8z"/><path stroke="#222" stroke-width="0.9" d="M13 5.5h5M13 8h5M13 10.5h5M13 13h5M13 15.5h5M15.5 4v12"/><path stroke="#fff" stroke-width="1.7" d="M3 6.2l5 7.6M8 6.2l-5 7.6"/></svg>
<svg class="a" style="left:380.55px;top:615.85px;" width="23.3" height="23.3" viewBox="0 0 24 24"><path fill="#111" d="M10 18h4v-2h-4v2zM3 6v2h18V6H3zm3 7h12v-2H6v2z"/></svg>
<svg class="a" style="left:422.40px;top:614.60px;" width="25.8" height="25.8" viewBox="0 0 24 24"><path fill="#111" d="M17.65 6.35C16.2 4.9 14.21 4 12 4c-4.42 0-7.99 3.58-7.99 8s3.57 8 7.99 8c3.73 0 6.84-2.55 7.73-6h-2.08c-.82 2.33-3.04 4-5.65 4-3.31 0-6-2.69-6-6s2.69-6 6-6c1.66 0 3.14.69 4.22 1.78L13 11h7V4l-2.35 2.35z"/></svg>
<svg class="a" style="left:466.65px;top:615.85px;" width="23.3" height="23.3" viewBox="0 0 24 24"><path fill="#111" d="M9 21c0 .55.45 1 1 1h4c.55 0 1-.45 1-1v-1H9v1zm3-19C8.14 2 5 5.14 5 9c0 2.38 1.19 4.47 3 5.74V17c0 .55.45 1 1 1h6c.55 0 1-.45 1-1v-2.26c1.81-1.27 3-3.36 3-5.74 0-3.86-3.14-7-7-7zm2.85 11.1l-.85.6V16h-4v-2.3l-.85-.6C7.8 12.16 7 10.63 7 9c0-2.76 2.24-5 5-5s5 2.24 5 5c0 1.63-.8 3.16-2.15 4.1z"/></svg>
<svg class="a" style="left:508.30px;top:615.00px;" width="25" height="25" viewBox="0 0 24 24"><path fill="#111" d="M6 10c-1.1 0-2 .9-2 2s.9 2 2 2 2-.9 2-2-.9-2-2-2zm12 0c-1.1 0-2 .9-2 2s.9 2 2 2 2-.9 2-2-.9-2-2-2zm-6 0c-1.1 0-2 .9-2 2s.9 2 2 2 2-.9 2-2-.9-2-2-2z"/></svg>
<div class="a" style="left:282px;top:614px;width:1.6px;height:27px;background:#222;"></div>
<div class="t" style="top:656.93px;font-size:14.5px;color:#222;left:111.10px;">Record: 1 of 9</div>
<div class="a" style="left:207px;top:657.5px;width:1.3px;height:13px;background:#222;"></div>
<div class="t" style="top:656.93px;font-size:14.5px;color:#222;left:219.00px;">Seconds To Run: 0.18</div>
<div class="a" style="left:368px;top:657.5px;width:1.3px;height:13px;background:#222;"></div>
<div class="t" style="top:656.93px;font-size:14.5px;color:#222;left:379.50px;">Quantity: 795.974044</div>
<div class="a" style="left:528px;top:657.5px;width:1.3px;height:13px;background:#222;"></div>
<div class="t" style="top:656.93px;font-size:14.5px;color:#222;left:538.50px;">Extension: 96.4261</div>
<div class="a" style="left:105px;top:676px;width:3.5px;height:32px;background:#cfcfcf;"></div>
<div class="t" style="top:685.23px;font-size:14.5px;color:#222;left:134.70px;">Seq</div>
<div class="t" style="top:685.23px;font-size:14.5px;color:#222;left:231.00px;">Part Number</div>
<div class="t" style="top:685.23px;font-size:14.5px;color:#222;left:412.00px;">Description</div>
<div class="t" style="top:685.23px;font-size:14.5px;color:#222;left:563.50px;">Unit</div>
<div class="t" style="top:685.23px;font-size:14.5px;color:#222;left:650.50px;">Quantity</div>
<div class="t" style="top:685.23px;font-size:14.5px;color:#222;left:763.40px;">Current Cost</div>
<div class="t" style="top:685.23px;font-size:14.5px;color:#222;left:899.60px;">Extension</div>
<div class="t" style="top:685.23px;font-size:14.5px;color:#222;left:1018.30px;">Notes</div>
<div class="t" style="top:685.23px;font-size:14.5px;color:#222;left:1092.50px;">Total Weight</div>
<div class="t" style="top:685.23px;font-size:14.5px;color:#222;left:1224.90px;">CAS #</div>
<div class="t" style="top:685.23px;font-size:14.5px;color:#222;left:1376.00px;">INCI Name</div>
<div class="t" style="top:685.23px;font-size:14.5px;color:#222;left:1589.50px;">Trade Name</div>
<div class="t" style="top:685.23px;font-size:14.5px;color:#222;left:1759.50px;">Ingredient Labeling</div>
<div class="t" style="top:685.23px;font-size:14.5px;color:#222;left:1967.00px;">Label Override</div>
<div class="a" style="left:2143px;top:685px;width:1.5px;height:14px;background:#555;"></div>
<div class="a" style="left:105px;top:707.5px;width:2042px;height:1.2px;background:#333;"></div>
<div class="a" style="left:105px;top:708.8px;width:2042px;height:33.75px;background:#cdcdcd;"></div>
<div class="t" style="top:718.83px;font-size:14.5px;color:#2a2a2a;right:1978.70px;">1</div>
<div class="t" style="top:718.83px;font-size:14.5px;color:#2a2a2a;left:193.00px;">CM-RM75001</div>
<div class="t" style="top:718.83px;font-size:14.5px;color:#2a2a2a;left:370.50px;">Glyceryl stearate</div>
<div class="t" style="top:718.83px;font-size:14.5px;color:#2a2a2a;left:547.50px;">Pound</div>
<div class="t" style="top:718.83px;font-size:14.5px;color:#2a2a2a;right:1421.50px;">8.317469</div>
<div class="t" style="top:718.83px;font-size:14.5px;color:#2a2a2a;right:1295.40px;">0.5800</div>
<div class="t" style="top:718.83px;font-size:14.5px;color:#2a2a2a;right:1169.10px;">4.8241</div>
<div class="t" style="top:718.83px;font-size:14.5px;color:#2a2a2a;right:976.70px;">8.3174685</div>
<div class="t" style="top:718.83px;font-size:14.5px;color:#2a2a2a;left:1195.80px;">31566-31-1</div>
<div class="t" style="top:718.83px;font-size:14.5px;color:#2a2a2a;left:1312.30px;">Glyceryl Stearate</div>
<div class="t" style="top:718.83px;font-size:14.5px;color:#2a2a2a;left:1529.70px;">GMS</div>
<div class="a" style="left:105px;top:742.55px;width:2042px;height:33.75px;background:#dae5f6;"></div>
<div class="t" style="top:752.58px;font-size:14.5px;color:#2a2a2a;right:1978.70px;">2</div>
<div class="t" style="top:752.58px;font-size:14.5px;color:#2a2a2a;left:193.00px;">CM-RM75021</div>
<div class="t" style="top:752.58px;font-size:14.5px;color:#2a2a2a;left:370.50px;">Stearic acid</div>
<div class="t" style="top:752.58px;font-size:14.5px;color:#2a2a2a;left:547.50px;">Gallon</div>
<div class="t" style="top:752.58px;font-size:14.5px;color:#2a2a2a;right:1421.50px;">5.094450</div>
<div class="t" style="top:752.58px;font-size:14.5px;color:#2a2a2a;right:1295.40px;">1.2000</div>
<div class="t" style="top:752.58px;font-size:14.5px;color:#2a2a2a;right:1169.10px;">50.9445</div>
<div class="t" style="top:752.58px;font-size:14.5px;color:#2a2a2a;right:976.70px;">42.4537458…</div>
<div class="t" style="top:752.58px;font-size:14.5px;color:#2a2a2a;left:1195.80px;">57-11-4</div>
<div class="t" style="top:752.58px;font-size:14.5px;color:#2a2a2a;left:1312.30px;">Stearic Acid</div>
<div class="t" style="top:752.58px;font-size:14.5px;color:#2a2a2a;left:1529.70px;">VSTEARIN TM SA05</div>
<div class="a" style="left:105px;top:776.3px;width:2042px;height:33.75px;background:#fff;"></div>
<div class="t" style="top:786.33px;font-size:14.5px;color:#2a2a2a;right:1978.70px;">3</div>
<div class="t" style="top:786.33px;font-size:14.5px;color:#2a2a2a;left:193.00px;">CM-RM75087</div>
<div class="t" style="top:786.33px;font-size:14.5px;color:#2a2a2a;left:370.50px;">Ceteareth-12</div>
<div class="t" style="top:786.33px;font-size:14.5px;color:#2a2a2a;left:547.50px;">Kilogram</div>
<div class="t" style="top:786.33px;font-size:14.5px;color:#2a2a2a;right:1421.50px;">2.827939</div>
<div class="t" style="top:786.33px;font-size:14.5px;color:#2a2a2a;right:1295.40px;">0.3400</div>
<div class="t" style="top:786.33px;font-size:14.5px;color:#2a2a2a;right:1169.10px;">2.1197</div>
<div class="t" style="top:786.33px;font-size:14.5px;color:#2a2a2a;right:976.70px;">6.23453889…</div>
<div class="t" style="top:786.33px;font-size:14.5px;color:#2a2a2a;left:1195.80px;">68439-49-6</div>
<div class="t" style="top:786.33px;font-size:14.5px;color:#2a2a2a;left:1312.30px;">Ceteareth-12</div>
<div class="t" style="top:786.33px;font-size:14.5px;color:#2a2a2a;left:1529.70px;">EMULGADE® CM</div>
<div class="a" style="left:105px;top:810.05px;width:2042px;height:33.75px;background:#dae5f6;"></div>
<div class="t" style="top:820.08px;font-size:14.5px;color:#2a2a2a;right:1978.70px;">4</div>
<div class="t" style="top:820.08px;font-size:14.5px;color:#2a2a2a;left:193.00px;">CM-RM75111</div>
<div class="t" style="top:820.08px;font-size:14.5px;color:#2a2a2a;left:370.50px;">Octyldodecanol</div>
<div class="t" style="top:820.08px;font-size:14.5px;color:#2a2a2a;left:547.50px;">Pound</div>
<div class="t" style="top:820.08px;font-size:14.5px;color:#2a2a2a;right:1421.50px;">6.238101</div>
<div class="t" style="top:820.08px;font-size:14.5px;color:#2a2a2a;right:1295.40px;">0.1850</div>
<div class="t" style="top:820.08px;font-size:14.5px;color:#2a2a2a;right:1169.10px;">1.1540</div>
<div class="t" style="top:820.08px;font-size:14.5px;color:#2a2a2a;right:976.70px;">6.2381014</div>
<div class="t" style="top:820.08px;font-size:14.5px;color:#2a2a2a;left:1195.80px;">5333-42-6</div>
<div class="t" style="top:820.08px;font-size:14.5px;color:#2a2a2a;left:1312.30px;">Octyldodecanol</div>
<div class="t" style="top:820.08px;font-size:14.5px;color:#2a2a2a;left:1529.70px;">CutiBiome CLR</div>
<div class="a" style="left:105px;top:843.8px;width:2042px;height:33.75px;background:#fff;"></div>
<div class="t" style="top:853.83px;font-size:14.5px;color:#2a2a2a;right:1978.70px;">5</div>
<div class="t" style="top:853.83px;font-size:14.5px;color:#2a2a2a;left:193.00px;">CM-RM75126</div>
<div class="t" style="top:853.83px;font-size:14.5px;color:#2a2a2a;left:370.50px;">Paraffinum liquidum</div>
<div class="t" style="top:853.83px;font-size:14.5px;color:#2a2a2a;left:547.50px;">Pound</div>
<div class="t" style="top:853.83px;font-size:14.5px;color:#2a2a2a;right:1421.50px;">11.810684</div>
<div class="t" style="top:853.83px;font-size:14.5px;color:#2a2a2a;right:1295.40px;">0.4300</div>
<div class="t" style="top:853.83px;font-size:14.5px;color:#2a2a2a;right:1169.10px;">5.0786</div>
<div class="t" style="top:853.83px;font-size:14.5px;color:#2a2a2a;left:1003.40px;">Mix the fi…</div>
<div class="t" style="top:853.83px;font-size:14.5px;color:#2a2a2a;right:976.70px;">11.8106838</div>
<div class="t" style="top:853.83px;font-size:14.5px;color:#2a2a2a;left:1195.80px;">8012-95-1 / 8…</div>
<div class="t" style="top:853.83px;font-size:14.5px;color:#2a2a2a;left:1312.30px;">Paraffinum liquidum</div>
<div class="t" style="top:853.83px;font-size:14.5px;color:#2a2a2a;left:1529.70px;">PURETOL™ 15</div>
<div class="a" style="left:105px;top:877.55px;width:2042px;height:33.75px;background:#dae5f6;"></div>
<div class="t" style="top:887.58px;font-size:14.5px;color:#2a2a2a;right:1978.70px;">6</div>
<div class="t" style="top:887.58px;font-size:14.5px;color:#2a2a2a;left:193.00px;">CM-RM75112</div>
<div class="t" style="top:887.58px;font-size:14.5px;color:#2a2a2a;left:370.50px;">Triethanolamine</div>
<div class="t" style="top:887.58px;font-size:14.5px;color:#2a2a2a;left:547.50px;">Ounces</div>
<div class="t" style="top:887.58px;font-size:14.5px;color:#2a2a2a;right:1421.50px;">16.634937</div>
<div class="t" style="top:887.58px;font-size:14.5px;color:#2a2a2a;right:1295.40px;">0.4300</div>
<div class="t" style="top:887.58px;font-size:14.5px;color:#2a2a2a;right:1169.10px;">0.4471</div>
<div class="t" style="top:887.58px;font-size:14.5px;color:#2a2a2a;right:976.70px;">1.03968356…</div>
<div class="t" style="top:887.58px;font-size:14.5px;color:#2a2a2a;left:1195.80px;">102-71-6</div>
<div class="t" style="top:887.58px;font-size:14.5px;color:#2a2a2a;left:1312.30px;">Triethanolamine</div>
<div class="t" style="top:887.58px;font-size:14.5px;color:#2a2a2a;left:1529.70px;">Daltogen</div>
<div class="a" style="left:105px;top:911.3px;width:2042px;height:33.75px;background:#fff;"></div>
<div class="t" style="top:921.33px;font-size:14.5px;color:#2a2a2a;right:1978.70px;">7</div>
<div class="t" style="top:921.33px;font-size:14.5px;color:#2a2a2a;left:193.00px;">CM-RM75033</div>
<div class="t" style="top:921.33px;font-size:14.5px;color:#2a2a2a;left:370.50px;">Deionized water</div>
<div class="t" style="top:921.33px;font-size:14.5px;color:#2a2a2a;left:547.50px;">Pound</div>
<div class="t" style="top:921.33px;font-size:14.5px;color:#2a2a2a;right:1421.50px;">272.826187</div>
<div class="t" style="top:921.33px;font-size:14.5px;color:#2a2a2a;right:1295.40px;">0.1125</div>
<div class="t" style="top:921.33px;font-size:14.5px;color:#2a2a2a;right:1169.10px;">30.6929</div>
<div class="t" style="top:921.33px;font-size:14.5px;color:#2a2a2a;left:1003.40px;">Mix the n…</div>
<div class="t" style="top:921.33px;font-size:14.5px;color:#2a2a2a;right:976.70px;">272.8261874</div>
<div class="t" style="top:921.33px;font-size:14.5px;color:#2a2a2a;left:1195.80px;">7732-18-5</div>
<div class="t" style="top:921.33px;font-size:14.5px;color:#2a2a2a;left:1312.30px;">Deionized water</div>
<div class="t" style="top:921.33px;font-size:14.5px;color:#2a2a2a;left:1529.70px;">Deionized water</div>
<div class="a" style="left:105px;top:945.05px;width:2042px;height:33.75px;background:#dae5f6;"></div>
<div class="t" style="top:955.08px;font-size:14.5px;color:#2a2a2a;right:1978.70px;">8</div>
<div class="t" style="top:955.08px;font-size:14.5px;color:#2a2a2a;left:193.00px;">CSR-101574</div>
<div class="t" style="top:955.08px;font-size:14.5px;color:#2a2a2a;left:370.50px;">Phenoxetol</div>
<div class="t" style="top:955.08px;font-size:14.5px;color:#2a2a2a;left:547.50px;">Pound</div>
<div class="t" style="top:955.08px;font-size:14.5px;color:#2a2a2a;right:1421.50px;">1.455557</div>
<div class="t" style="top:955.08px;font-size:14.5px;color:#2a2a2a;right:1295.40px;">1.2300</div>
<div class="t" style="top:955.08px;font-size:14.5px;color:#2a2a2a;right:1169.10px;">0.8121</div>
<div class="t" style="top:955.08px;font-size:14.5px;color:#2a2a2a;right:976.70px;">1.45555700…</div>
<div class="t" style="top:955.08px;font-size:14.5px;color:#2a2a2a;left:1195.80px;">122-99-6</div>
<div class="t" style="top:955.08px;font-size:14.5px;color:#2a2a2a;left:1312.30px;">Phenoxyethanol</div>
<div class="t" style="top:955.08px;font-size:14.5px;color:#2a2a2a;left:1529.70px;">Phenoxyethanol SA</div>
<div class="a" style="left:105px;top:978.8px;width:2042px;height:33.75px;background:#fff;"></div>
<div class="t" style="top:988.83px;font-size:14.5px;color:#2a2a2a;right:1978.70px;">9</div>
<div class="t" style="top:988.83px;font-size:14.5px;color:#2a2a2a;left:193.00px;">CSR-190885</div>
<div class="t" style="top:988.83px;font-size:14.5px;color:#2a2a2a;left:370.50px;">Fragrance - SZ11607 O…</div>
<div class="t" style="top:988.83px;font-size:14.5px;color:#2a2a2a;left:547.50px;">Grams</div>
<div class="t" style="top:988.83px;font-size:14.5px;color:#2a2a2a;right:1421.50px;">470.768720</div>
<div class="t" style="top:988.83px;font-size:14.5px;color:#2a2a2a;right:1295.40px;">0.7500</div>
<div class="t" style="top:988.83px;font-size:14.5px;color:#2a2a2a;right:1169.10px;">0.3531</div>
<div class="t" style="top:988.83px;font-size:14.5px;color:#2a2a2a;left:1003.40px;">Mix the n…</div>
<div class="t" style="top:988.83px;font-size:14.5px;color:#2a2a2a;right:976.70px;">1.03785672…</div>
<div class="t" style="top:988.83px;font-size:14.5px;color:#2a2a2a;left:1312.30px;">Citrus Nobilis (Mandarin Ora…</div>
<div class="a" style="left:105px;top:1052px;width:2039.5px;height:15px;background:#efefef;"></div>
<div class="a" style="left:125.6px;top:1052.5px;width:1712.4px;height:14px;background:#c1c1c1;"></div>
<svg class="a" style="left:109px;top:1056.5px;" width="10" height="11" viewBox="0 0 10 11"><path fill="#999" d="M3.5 5.5L8 2V9z"/></svg>
<svg class="a" style="left:2130px;top:1056px;" width="10" height="11" viewBox="0 0 10 11"><path fill="#444" d="M3 1.5L8 5.5L3 10.5z"/></svg>
<svg class="a" style="left:23.30px;top:21.50px;" width="45" height="45" viewBox="0 0 24 24"><path fill="#fff" d="M10 20v-6h4v6h5v-8h3L12 3 2 12h3v8z"/></svg>
<svg class="a" style="left:20px;top:100px;" width="50" height="50" viewBox="0 0 50 50"><rect x="12.1" y="12.3" width="27.9" height="19" rx="1" fill="#fff"/><rect x="14" y="14.1" width="24.2" height="15.4" fill="#555"/><rect x="15" y="15" width="22.2" height="13.6" fill="#2d2d2d"/><rect x="20.5" y="17" width="5.5" height="1.3" fill="#aaa"/><rect x="20.5" y="19.3" width="5.5" height="1.3" fill="#aaa"/><rect x="20.5" y="22.3" width="5.5" height="2.3" fill="#999"/><circle cx="30.5" cy="22.3" r="3.7" fill="#fff"/><path d="M12 31.2H40L44 34.5Q44.3 37 42 37H10Q7.6 37 8 34.5z" fill="#fff"/><rect x="23" y="34" width="6" height="0.9" fill="#666"/></svg>
<svg class="a" style="left:20px;top:180px;" width="50" height="50" viewBox="0 0 50 50"><path d="M7.9 34.8L17.5 26.6L24.7 33.2L40.6 19L44 22.3V44H7.9z" fill="#fff"/><path d="M13.3 30V44M19.4 27V44M25.6 33V44M31.8 27V44M38 22V44" stroke="#2d2d2d" stroke-width="0.9"/><path d="M7.3 33.5L17.5 24.5L24.7 31L38 19" stroke="#2d2d2d" stroke-width="3.6" fill="none"/><path d="M8.3 32.2L17.5 24L24.7 30.5L39 17" stroke="#fff" stroke-width="2.2" fill="none"/><path d="M35.5 12H44V20.5z" fill="#fff"/><text x="24.8" y="22" font-family="Liberation Sans" font-weight="700" font-size="17" text-anchor="middle" fill="#fff">$</text></svg>
<svg class="a" style="left:20px;top:260px;" width="50" height="50" viewBox="0 0 50 50"><path d="M30.5 9.9H11.5Q10.4 9.9 10.4 11V42.3Q10.4 43.4 11.5 43.4H36.1Q37.2 43.4 37.2 42.3V41.5" stroke="#fff" stroke-width="2.3" fill="none"/><path d="M30.3 9.9L37.7 17.3V23.6" stroke="#fff" stroke-width="2.3" fill="none"/><path d="M30 9L38 17H30z" fill="#fff"/><path d="M13.3 17.5H27.2M13.3 21.4H33.5M13.3 25.3H24.4M13.3 29.3H21.9M13.3 33.2H21.9M13.3 37H21.9" stroke="#fff" stroke-width="1.6"/><circle cx="32" cy="31.7" r="7" stroke="#2d2d2d" stroke-width="4" fill="#2d2d2d"/><circle cx="32" cy="31.7" r="7" stroke="#fff" stroke-width="2" fill="none"/><path d="M37 37L41.8 41.8" stroke="#fff" stroke-width="3" stroke-linecap="round"/><text x="32" y="36" font-family="Liberation Sans" font-weight="700" font-size="11" text-anchor="middle" fill="#fff">$</text></svg>
<svg class="a" style="left:20px;top:343px;" width="50" height="50" viewBox="0 0 50 50"><path d="M13 12H24.5L27.2 25.5H30V30H8V25H13z" fill="#fff"/><path d="M15.5 14.5H22.5L24.5 27.7H19.5L19.3 25H15.5z" fill="#2d2d2d"/><path d="M8 26H30V31L24 33L15 36H8z" fill="#fff"/><circle cx="11" cy="35" r="3.6" fill="#fff" stroke="#2d2d2d" stroke-width="1"/><circle cx="11" cy="35" r="1" fill="#2d2d2d"/><circle cx="28" cy="34" r="4.3" fill="#fff" stroke="#2d2d2d" stroke-width="1"/><circle cx="28" cy="34" r="1.3" fill="#2d2d2d"/><rect x="31" y="12" width="2.6" height="21" fill="#fff"/><path d="M33 31.5L43 32.5V34L33 34z" fill="#fff"/><rect x="35" y="14.3" width="9" height="7.7" fill="#fff"/><rect x="35" y="23.3" width="9" height="7.2" fill="#fff"/></svg>
<svg class="a" style="left:20px;top:423px;" width="50" height="50" viewBox="0 0 50 50"><path d="M8 18H15L15.5 29.7L25.5 25.7V28.5L31 25.7L31.5 28.5L37.5 25.7L38 28.5L44 25.5V44H8z" fill="#fff"/><path d="M18.5 31.5h2.5v4.5h-2.5zM25 31.5h2.5v4.5H25zM31.5 31.5h2.5v4.5h-2.5zM37.5 31.5h2.5v4.5h-2.5z" fill="#2d2d2d"/><ellipse cx="23" cy="12" rx="13" ry="3" transform="rotate(-11 23 12)" fill="#fff"/></svg>
<svg class="a" style="left:20px;top:505px;" width="50" height="50" viewBox="0 0 50 50"><rect x="13.3" y="7.2" width="25.5" height="35.8" rx="2.6" fill="#fff"/><rect x="17" y="11" width="18" height="7" fill="#2d2d2d"/><rect x="16.8" y="21.5" width="3.6" height="3.5" fill="#2d2d2d"/><rect x="16.8" y="28.7" width="3.6" height="3.5" fill="#2d2d2d"/><rect x="16.8" y="35.6" width="3.6" height="3.5" fill="#2d2d2d"/><rect x="24.2" y="21.5" width="3.6" height="3.5" fill="#2d2d2d"/><rect x="24.2" y="28.7" width="3.6" height="3.5" fill="#2d2d2d"/><rect x="24.2" y="35.6" width="3.6" height="3.5" fill="#2d2d2d"/><rect x="31.5" y="21.5" width="3.6" height="3.5" fill="#2d2d2d"/><rect x="31.5" y="28.7" width="3.6" height="3.5" fill="#2d2d2d"/><rect x="31.5" y="35.6" width="3.6" height="3.5" fill="#2d2d2d"/></svg>
<svg class="a" style="left:20px;top:586px;" width="50" height="50" viewBox="0 0 50 50"><path d="M18 21.5C21 17 25 14.5 29.5 13.6L36 17.4L41.5 17C43.5 19.5 44.3 23 44 26.5C43 28.5 40.5 29.3 38 29.8L27 20.3C24 22 21 22.6 18 21.5z" fill="#fff"/><path d="M8.8 28.3C8.3 24 8.8 20 10.6 17.5L14.5 18.2L22.5 14L25 14.5" stroke="#fff" stroke-width="1.1" fill="none"/><path d="M38 29.8L36 33C33 35 30 36.5 27 36.8L23.3 36.3" stroke="#fff" stroke-width="1.1" fill="none"/><path d="M13.5 28.7l2-1.7 3 2.2-2 2zM16.8 31.6l2.3-1.8 3 2.3-2.2 2.1zM19.5 34.2l2.5-2 2.6 2.2-2.1 2.2zM22.5 36.5l1.8-1.4 1.6 1.6-1.2 1.2z" fill="#fff"/><path d="M28.5 27.5L37 33.5M26.5 30L33.5 35M25 32.5L30 35.8" stroke="#bbb" stroke-width="0.9"/></svg>
<svg class="a" style="left:20px;top:667px;" width="50" height="50" viewBox="0 0 50 50"><path d="M37.5 10.8H39.5Q41.5 10.8 41.5 12.8V40Q41.5 42 39.5 42H17.5Q15.5 42 15.5 40V38.5" stroke="#fff" stroke-width="2.3" fill="none"/><rect x="11.4" y="8.4" width="24.7" height="29" rx="1.6" stroke="#fff" stroke-width="2.3" fill="#2d2d2d"/><rect x="15.5" y="13.3" width="5.5" height="5.7" fill="#fff"/><path d="M23 13.7H33M23 16H29M23 18.5H26" stroke="#ccc" stroke-width="1"/><path d="M15.3 22.3H33M15.3 25H30M15.3 27.5H30M15.3 29.5H30" stroke="#ddd" stroke-width="1.2"/></svg>
<svg class="a" style="left:20px;top:748px;" width="50" height="50" viewBox="0 0 50 50"><path d="M10.5 12.2V39.5C10.5 42.3 17 44.5 25.7 44.5S41 42.3 41 39.5V12.2z" fill="#fff"/><ellipse cx="25.7" cy="12.2" rx="14.3" ry="5" fill="#fff"/><path d="M11 13.5C13 16.5 19 17.5 25.7 17.5S38.5 16.5 40.5 13.5M10.5 22C12.5 25.5 19 26.5 25.7 26.5S39 25.5 41 22M10.5 31C12.5 34.5 19 35.5 25.7 35.5S39 34.5 41 31" stroke="#2d2d2d" stroke-width="1.1" fill="none"/></svg>
</body></html>
